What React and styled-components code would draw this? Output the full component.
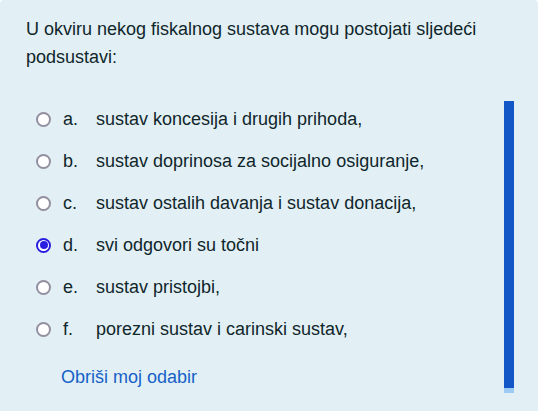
import styled, { createGlobalStyle } from "styled-components";

const GlobalStyle = createGlobalStyle`
  html, body {
    margin: 0;
    padding: 0;
    background: #ffffff;
  }
  body {
    font-family: "Liberation Sans", Arial, sans-serif;
  }
`;

const options = [
  { letter: "a.", text: "sustav koncesija i drugih prihoda," },
  { letter: "b.", text: "sustav doprinosa za socijalno osiguranje," },
  { letter: "c.", text: "sustav ostalih davanja i sustav donacija," },
  { letter: "d.", text: "svi odgovori su točni", checked: true },
  { letter: "e.", text: "sustav pristojbi," },
  { letter: "f.", text: "porezni sustav i carinski sustav," },
];

export default function App() {
  return (
    <>
      <GlobalStyle />
      <Panel>
        <Question>
          U okviru nekog fiskalnog sustava mogu postojati sljedeći podsustavi:
        </Question>
        <Body>
          <Answers>
            {options.map((o) => (
              <Option key={o.letter}>
                <Radio $checked={o.checked} />
                <Letter>{o.letter}</Letter>
                <Text>{o.text}</Text>
              </Option>
            ))}
            <ClearLink href="#">Obriši moj odabir</ClearLink>
          </Answers>
          <Scrollbar>
            <Thumb />
            <ThumbEnd />
          </Scrollbar>
        </Body>
      </Panel>
    </>
  );
}

const Panel = styled.div`
  width: 538px;
  height: 411px;
  box-sizing: border-box;
  background: #e2f0f5;
  border-radius: 4px 4px 0 0;
  padding: 15px 0 0 26px;
  color: #10262b;
  overflow: hidden;
`;

const Question = styled.div`
  font-size: 18px;
  line-height: 28px;
  padding-right: 20px;
`;

const Body = styled.div`
  display: flex;
  margin-top: 27px;
`;

const Answers = styled.div`
  flex: 1;
  display: flex;
  flex-direction: column;
  padding-left: 10px;
`;

const Option = styled.div`
  display: flex;
  align-items: center;
  height: 42px;
  font-size: 18px;
`;

const Radio = styled.span`
  box-sizing: border-box;
  width: 15px;
  height: 15px;
  border-radius: 50%;
  background: #ffffff;
  border: 2px solid ${(p) => (p.$checked ? "#2a1fe0" : "#948fa0")};
  margin-right: 12px;
  flex-shrink: 0;
  position: relative;
  ${(p) =>
    p.$checked &&
    `
    &::after {
      content: "";
      position: absolute;
      left: 1.5px;
      top: 1.5px;
      width: 8px;
      height: 8px;
      border-radius: 50%;
      background: #2a1fe0;
    }
  `}
`;

const Letter = styled.span`
  width: 33px;
  flex-shrink: 0;
`;

const Text = styled.span`
  white-space: nowrap;
`;

const ClearLink = styled.a`
  margin: 15px 0 0 25px;
  font-size: 18px;
  line-height: 24px;
  color: #1660c8;
  text-decoration: none;
`;

const Scrollbar = styled.div`
  width: 10px;
  margin: 3px 24px 0 0;
  display: flex;
  flex-direction: column;
`;

const Thumb = styled.div`
  height: 287px;
  background: #1356c6;
`;

const ThumbEnd = styled.div`
  height: 5px;
  background: #9ecbf5;
`;
